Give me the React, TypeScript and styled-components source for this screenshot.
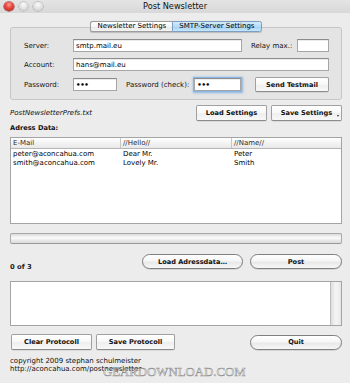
import React from "react";
import styled, { createGlobalStyle, css } from "styled-components";

const GlobalStyle = createGlobalStyle`
  html, body { margin: 0; padding: 0; }
  body {
    width: 350px;
    height: 383px;
    overflow: hidden;
    background: #ececec;
    font-family: "DejaVu Sans", "Liberation Sans", sans-serif;
  }
  * { box-sizing: border-box; }
`;

const UI_FONT = `"DejaVu Sans", "Liberation Sans", sans-serif`;

const Window = styled.div`
  position: relative;
  width: 350px;
  height: 383px;
  display: flex;
  flex-direction: column;
  background: #ececec;
  overflow: hidden;
  font-size: 7px;
  color: #111;
`;

const TitleBar = styled.div`
  flex: none;
  height: 13px;
  display: grid;
  grid-template-columns: 1fr auto 1fr;
  align-items: center;
  background: linear-gradient(#e4e4e4, #d8d8d8);
`;

const Lights = styled.div`
  display: flex;
  align-items: center;
  gap: 5px;
  padding-left: 4px;
`;

const Light = styled.span<{ $red?: boolean }>`
  width: 9.5px;
  height: 9.5px;
  border-radius: 50%;
  ${(p) =>
    p.$red
      ? css`
          background: radial-gradient(circle at 50% 30%, #ff9a93 0, #e6463e 45%, #a92019 100%);
          box-shadow: 0 0 0 0.5px #8a1e18;
        `
      : css`
          background: radial-gradient(circle at 50% 30%, #fbfbfb 0, #dedede 55%, #bcbcbc 100%);
          box-shadow: 0 0 0 0.5px #a2a2a2;
        `}
`;

const Title = styled.div`
  font-size: 8.2px;
  line-height: 13px;
  color: #111;
`;

const Body = styled.div`
  flex: 1;
  display: flex;
  flex-direction: column;
  padding: 0 8px 0 10px;
`;

const TabStrip = styled.div`
  position: relative;
  z-index: 1;
  display: flex;
  justify-content: center;
  margin-top: 8px;
  margin-bottom: -5px;
`;

const Tab = styled.div<{ $active?: boolean; $first?: boolean }>`
  height: 11px;
  line-height: 9px;
  padding: 0 6px;
  font-size: 7px;
  color: #000;
  white-space: nowrap;
  border: 1px solid ${(p) => (p.$active ? "#7d9dc2" : "#9c9c9c")};
  border-radius: ${(p) => (p.$first ? "2.5px 0 0 2.5px" : "0 2.5px 2.5px 0")};
  ${(p) => p.$first && "border-right: none;"}
  box-shadow: 0 0.5px 1px rgba(0, 0, 0, 0.18);
  background: ${(p) =>
    p.$active
      ? "linear-gradient(#d6ebfa, #b5dbf6 50%, #9dcff3 51%, #c9e7fb)"
      : "linear-gradient(#ffffff, #f5f5f5 50%, #e9e9e9 51%, #f4f4f4)"};
`;

const GroupBox = styled.div`
  display: flex;
  flex-direction: column;
  gap: 6px;
  padding: 11px 12px 7px 13px;
  border: 1px solid #c6c6c6;
  border-radius: 3px;
  background: #e4e4e4;
`;

const FormRow = styled.div<{ $h?: number }>`
  display: flex;
  align-items: center;
  height: ${(p) => p.$h ?? 13}px;
`;

const FieldLabel = styled.span<{ $w?: number; $ml?: number }>`
  flex: none;
  ${(p) => (p.$w ? `width: ${p.$w}px;` : "")}
  ${(p) => (p.$ml ? `margin-left: ${p.$ml}px;` : "")}
  font-size: 7px;
  color: #111;
  white-space: nowrap;
`;

const Field = styled.input<{ $w?: number; $focus?: boolean; $ml?: number; $auto?: boolean }>`
  box-sizing: border-box;
  height: 13px;
  margin: 0;
  ${(p) => (p.$w ? `width: ${p.$w}px; flex: none;` : "flex: 1; min-width: 0;")}
  ${(p) => (p.$ml ? `margin-left: ${p.$ml}px;` : "")}
  ${(p) => (p.$auto ? "margin-left: auto;" : "")}
  padding: 0 2px;
  font: 7px ${UI_FONT};
  color: #000;
  background: #fff;
  border: 1px solid #a6a6a6;
  border-top-color: #8c8c8c;
  border-radius: 0;
  outline: none;
  box-shadow: ${(p) =>
    p.$focus
      ? "inset 0 1px 0 rgba(0,0,0,0.06), 0 0 0 1px #8ab6e4, 0 0 2px 1.5px rgba(110, 165, 230, 0.75)"
      : "inset 0 1px 0 rgba(0,0,0,0.08)"};
`;

const Dots = styled(Field)`
  font-weight: bold;
  letter-spacing: -0.3px;
`;

const Button = styled.button<{ $w: number; $h?: number; $auto?: boolean }>`
  position: relative;
  flex: none;
  width: ${(p) => p.$w}px;
  height: ${(p) => p.$h ?? 16}px;
  margin: 0;
  ${(p) => (p.$auto ? "margin-left: auto;" : "")}
  padding: 0;
  font: bold 6.6px ${UI_FONT};
  color: #111;
  white-space: nowrap;
  border: 1px solid #a0a0a0;
  border-bottom-color: #8c8c8c;
  border-radius: 2px;
  background: linear-gradient(#ffffff, #f8f8f8 50%, #eeeeee 51%, #f8f8f8);
  box-shadow: 0 0.5px 0.5px rgba(0, 0, 0, 0.15);
`;

const PopArrow = styled.span`
  position: absolute;
  right: 2.5px;
  bottom: 3.5px;
  width: 0;
  height: 0;
  border-left: 1.5px solid transparent;
  border-right: 1.5px solid transparent;
  border-top: 2px solid #333;
`;

const PillButton = styled.button<{ $w: number; $auto?: boolean }>`
  flex: none;
  width: ${(p) => p.$w}px;
  height: 15px;
  margin: 0;
  ${(p) => (p.$auto ? "margin-left: auto;" : "")}
  padding: 0;
  font: bold 6.6px ${UI_FONT};
  color: #111;
  white-space: nowrap;
  border: 1px solid #7f7f7f;
  border-radius: 8px;
  background: linear-gradient(#ffffff, #f6f6f6 45%, #e8e8e8 55%, #f7f7f7);
  box-shadow: 0 0.5px 0.5px rgba(0, 0, 0, 0.2);
`;

const SettingsRow = styled.div`
  display: flex;
  align-items: center;
  gap: 4px;
  height: 16px;
  margin-top: 5px;
`;

const FileName = styled.span`
  flex: 1;
  font-style: italic;
  font-size: 7px;
  color: #111;
  white-space: nowrap;
`;

const SectionLabel = styled.div`
  margin-top: 3px;
  font-weight: bold;
  font-size: 6.65px;
  line-height: 9px;
  color: #111;
`;

const Table = styled.div`
  flex: none;
  height: 87px;
  margin-top: 4px;
  display: flex;
  flex-direction: column;
  border: 1px solid #a4a4a4;
  background: #fff;
`;

const COLS = "110px 111px 1fr";

const TableHead = styled.div`
  display: grid;
  grid-template-columns: ${COLS};
  height: 11px;
  border-bottom: 1px solid #b6b6b6;
  background: linear-gradient(#ffffff, #f3f3f3 50%, #e8e8e8);
`;

const HeadCell = styled.div<{ $last?: boolean }>`
  padding-left: 2px;
  line-height: 10px;
  font-size: 7px;
  color: #2a2a2a;
  ${(p) => (!p.$last ? "border-right: 1px solid #c6c6c6;" : "")}
`;

const TableBody = styled.div`
  padding-top: 1px;
`;

const TableRow = styled.div`
  display: grid;
  grid-template-columns: ${COLS};
  line-height: 8.7px;
`;

const Cell = styled.div`
  padding-left: 2px;
  font-size: 7px;
  color: #000;
  white-space: nowrap;
`;

const Progress = styled.div`
  flex: none;
  height: 11px;
  margin-top: 9px;
  border: 1px solid #a9a9a9;
  border-bottom-color: #999;
  border-radius: 2px;
  background: linear-gradient(#dadada, #eeeeee 25%, #fbfbfb 45%, #ececec 65%, #dcdcdc 100%);
`;

const StatusRow = styled.div`
  display: flex;
  align-items: flex-start;
  gap: 7px;
  height: 15px;
  margin-top: 10px;
`;

const Count = styled.span`
  margin-top: 9px;
  line-height: 9px;
  font-size: 6.8px;
  font-weight: bold;
  color: #222;
`;

const Protocol = styled.div`
  flex: none;
  height: 45px;
  margin-top: 12px;
  display: flex;
  justify-content: flex-end;
  border: 1px solid #a4a4a4;
  background: #fff;
`;

const Scroller = styled.div`
  width: 11px;
  border-left: 1px solid #bdbdbd;
  background: linear-gradient(to right, #dedede, #f4f4f4 45%, #f1f1f1 70%, #e6e6e6);
`;

const ButtonRow = styled.div`
  display: flex;
  align-items: center;
  gap: 4px;
  height: 16px;
  margin-top: 8px;
  padding-left: 1px;
`;

const Footer = styled.div`
  margin-top: 8px;
  font-size: 7px;
  line-height: 7.5px;
  color: #111;
`;

const Watermark = styled.div`
  position: absolute;
  left: 103px;
  top: 365px;
  font-family: "Liberation Serif", "DejaVu Serif", serif;
  font-size: 12.8px;
  line-height: 14px;
  color: rgba(235, 235, 235, 0.8);
  -webkit-text-stroke: 0.5px rgba(100, 100, 100, 0.7);
  white-space: nowrap;
  pointer-events: none;
`;

export default function App() {
  return (
    <>
      <GlobalStyle />
      <Window>
        <TitleBar>
          <Lights>
            <Light $red />
            <Light />
            <Light />
          </Lights>
          <Title>Post Newsletter</Title>
          <span />
        </TitleBar>
        <Body>
          <TabStrip>
            <Tab $first>Newsletter Settings</Tab>
            <Tab $active>SMTP-Server Settings</Tab>
          </TabStrip>
          <GroupBox>
            <FormRow>
              <FieldLabel $w={49}>Server:</FieldLabel>
              <Field $w={169} readOnly value="smtp.mail.eu" />
              <FieldLabel $ml={9}>Relay max.:</FieldLabel>
              <Field $w={32} $auto readOnly value="" />
            </FormRow>
            <FormRow>
              <FieldLabel $w={49}>Account:</FieldLabel>
              <Field readOnly value="hans@mail.eu" />
            </FormRow>
            <FormRow $h={15}>
              <FieldLabel $w={49}>Password:</FieldLabel>
              <Dots $w={44} readOnly value="•••" />
              <FieldLabel $ml={9}>Password (check):</FieldLabel>
              <Dots $w={47} $ml={5} $focus readOnly value="•••" />
              <Button $w={74} $h={15} $auto>
                Send Testmail
              </Button>
            </FormRow>
          </GroupBox>

          <SettingsRow>
            <FileName>PostNewsletterPrefs.txt</FileName>
            <Button $w={71}>Load Settings</Button>
            <Button $w={71}>
              Save Settings
              <PopArrow />
            </Button>
          </SettingsRow>

          <SectionLabel>Adress Data:</SectionLabel>
          <Table>
            <TableHead>
              <HeadCell>E-Mail</HeadCell>
              <HeadCell>//Hello//</HeadCell>
              <HeadCell $last>//Name//</HeadCell>
            </TableHead>
            <TableBody>
              <TableRow>
                <Cell>peter@aconcahua.com</Cell>
                <Cell>Dear Mr.</Cell>
                <Cell>Peter</Cell>
              </TableRow>
              <TableRow>
                <Cell>smith@aconcahua.com</Cell>
                <Cell>Lovely Mr.</Cell>
                <Cell>Smith</Cell>
              </TableRow>
            </TableBody>
          </Table>

          <Progress />

          <StatusRow>
            <Count>0 of 3</Count>
            <PillButton $w={101} $auto>
              Load Adressdata…
            </PillButton>
            <PillButton $w={92}>Post</PillButton>
          </StatusRow>

          <Protocol>
            <Scroller />
          </Protocol>

          <ButtonRow>
            <Button $w={81}>Clear Protocoll</Button>
            <Button $w={79}>Save Protocoll</Button>
            <PillButton $w={92} $auto>
              Quit
            </PillButton>
          </ButtonRow>

          <Footer>
            <div>copyright 2009 stephan schulmeister</div>
            <div>http://aconcahua.com/postnewsletter</div>
          </Footer>
        </Body>
        <Watermark>GEARDOWNLOAD.COM</Watermark>
      </Window>
    </>
  );
}
